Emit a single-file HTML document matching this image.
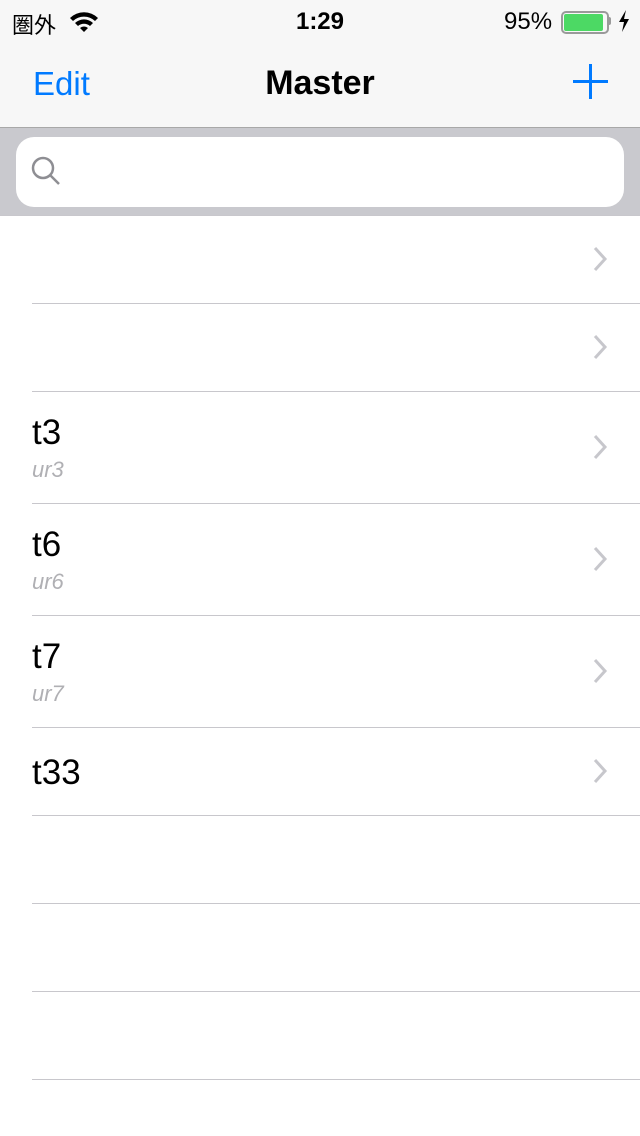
<!DOCTYPE html>
<html><head><meta charset="utf-8"><style>
body{margin:0;width:640px;height:1136px;background:#fff;font-family:"Liberation Sans","Noto Sans CJK JP",sans-serif;position:relative;overflow:hidden}
.abs{position:absolute}
.sep{position:absolute;left:32px;right:0;height:1px;background:#c8c7cc}
.chev{position:absolute;left:592px;width:16px;height:28px}
.t{position:absolute;left:32px;font-size:35px;color:#000}
.s{position:absolute;left:32px;font-size:22px;color:#b0b0b4;font-style:italic}
</style></head><body>
<div class="abs" style="left:0;top:0;width:640px;height:128px;background:#f7f7f7"></div>
<div class="abs" style="left:12px;top:8px;font-size:22px">圏外</div>
<svg class="abs" style="left:68px;top:9px" width="32" height="24" viewBox="0 0 32 24"><path d="M2 9 A20 20 0 0 1 30 9 L27 12 A16 16 0 0 0 5 12Z M7 14 A13 13 0 0 1 25 14 L22 17 A9 9 0 0 0 10 17Z M12 19 A6 6 0 0 1 20 19 L16 23Z" fill="#000"/></svg>
<div class="abs" style="left:0;width:640px;text-align:center;top:8px;font-size:24px;font-weight:bold">1:29</div>
<div class="abs" style="left:504px;top:8px;font-size:24px">95%</div>
<div class="abs" style="left:561px;top:11px;width:44px;height:19px;border:2px solid #9a9a9a;border-radius:5px"></div>
<div class="abs" style="left:564px;top:14px;width:39px;height:17px;background:#4cd964;border-radius:2px"></div>
<div class="abs" style="left:608px;top:17px;width:3px;height:8px;background:#9a9a9a;border-radius:0 2px 2px 0"></div>
<svg class="abs" style="left:617px;top:10px" width="14" height="22" viewBox="0 0 14 22"><path d="M9 0 L2 12 H7 L5 22 L12 9 H7Z" fill="#000"/></svg>
<div class="abs" style="left:33px;top:65px;font-size:33px;color:#007aff">Edit</div>
<div class="abs" style="left:0;width:640px;text-align:center;top:64px;font-size:34px;font-weight:bold">Master</div>
<div class="abs" style="left:573px;top:80px;width:35px;height:3px;background:#007aff"></div>
<div class="abs" style="left:589px;top:64px;width:3px;height:35px;background:#007aff"></div>
<div class="abs" style="left:0;top:127px;width:640px;height:1px;background:#a8a8a8"></div>
<div class="abs" style="left:0;top:128px;width:640px;height:87px;background:#c9c9ce"></div>
<div class="abs" style="left:16px;top:137px;width:608px;height:70px;background:#fff;border-radius:18px"></div>
<svg class="abs" style="left:30px;top:155px" width="32" height="32" viewBox="0 0 32 32"><circle cx="13" cy="13" r="10" fill="none" stroke="#8e8e93" stroke-width="2.5"/><path d="M20 20 L29 29" stroke="#8e8e93" stroke-width="2.5"/></svg>
<div class="abs" style="left:0;top:215px;width:640px;height:1px;background:#c8c7cc"></div>
<div class="sep" style="top:303px"></div><div class="sep" style="top:391px"></div><div class="sep" style="top:503px"></div><div class="sep" style="top:615px"></div><div class="sep" style="top:727px"></div><div class="sep" style="top:815px"></div><div class="sep" style="top:903px"></div><div class="sep" style="top:991px"></div><div class="sep" style="top:1079px"></div>
<svg class="chev" style="top:245px" viewBox="0 0 16 28"><path d="M3 3 L13 14 L3 25" fill="none" stroke="#c7c7cc" stroke-width="3"/></svg>
<svg class="chev" style="top:333px" viewBox="0 0 16 28"><path d="M3 3 L13 14 L3 25" fill="none" stroke="#c7c7cc" stroke-width="3"/></svg>
<svg class="chev" style="top:433px" viewBox="0 0 16 28"><path d="M3 3 L13 14 L3 25" fill="none" stroke="#c7c7cc" stroke-width="3"/></svg>
<svg class="chev" style="top:545px" viewBox="0 0 16 28"><path d="M3 3 L13 14 L3 25" fill="none" stroke="#c7c7cc" stroke-width="3"/></svg>
<svg class="chev" style="top:657px" viewBox="0 0 16 28"><path d="M3 3 L13 14 L3 25" fill="none" stroke="#c7c7cc" stroke-width="3"/></svg>
<svg class="chev" style="top:757px" viewBox="0 0 16 28"><path d="M3 3 L13 14 L3 25" fill="none" stroke="#c7c7cc" stroke-width="3"/></svg>
<div class="t" style="top:413px">t3</div><div class="s" style="top:457px">ur3</div>
<div class="t" style="top:525px">t6</div><div class="s" style="top:569px">ur6</div>
<div class="t" style="top:637px">t7</div><div class="s" style="top:681px">ur7</div>
<div class="t" style="top:753px">t33</div>
</body></html>
